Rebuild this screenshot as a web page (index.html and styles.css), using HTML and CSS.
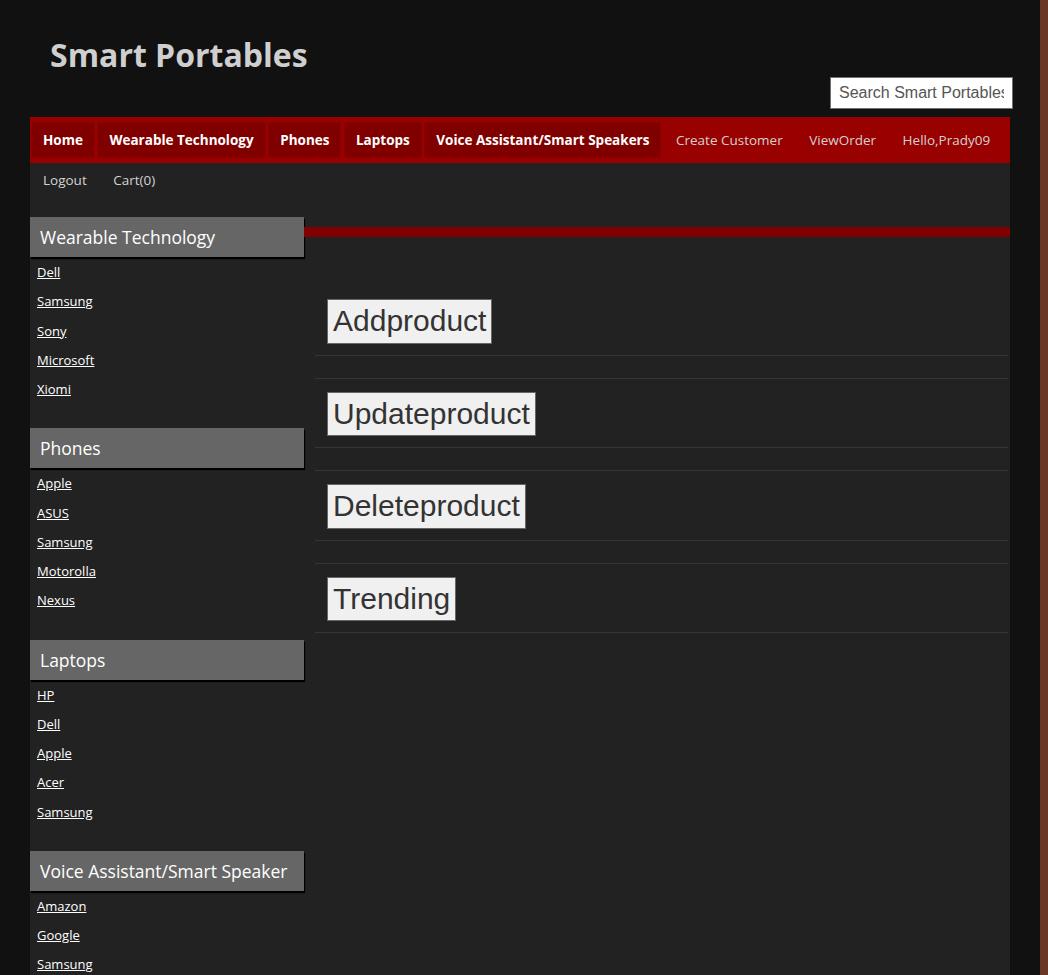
FILE: index.html
```html
<!DOCTYPE html>
<html lang="en">
<head>
<meta charset="utf-8">
<title>Smart Portables</title>
<link rel="stylesheet" href="styles.css">
</head>
<body>
<div class="page">
  <header class="masthead">
    <h1 class="brand">Smart Portables</h1>
    <div class="search-row">
      <input class="search" type="text" placeholder="Search Smart Portables">
    </div>
  </header>
  <div class="container">
    <nav class="topnav">
      <ul class="nav-list">
        <li><a class="tab" href="#">Home</a></li>
        <li><a class="tab" href="#">Wearable Technology</a></li>
        <li><a class="tab" href="#">Phones</a></li>
        <li><a class="tab" href="#">Laptops</a></li>
        <li><a class="tab" href="#">Voice Assistant/Smart Speakers</a></li>
        <li><a class="link" href="#">Create Customer</a></li>
        <li><a class="link" href="#">ViewOrder</a></li>
        <li><a class="link" href="#">Hello,Prady09</a></li>
        <li><a class="link" href="#">Logout</a></li>
        <li><a class="link" href="#">Cart(0)</a></li>
      </ul>
    </nav>
    <div class="body">
      <aside class="sidebar">
        <section class="cat">
          <h2 class="cat-title">Wearable Technology</h2>
          <ul class="cat-list">
            <li><a href="#">Dell</a></li>
            <li><a href="#">Samsung</a></li>
            <li><a href="#">Sony</a></li>
            <li><a href="#">Microsoft</a></li>
            <li><a href="#">Xiomi</a></li>
          </ul>
        </section>
        <section class="cat">
          <h2 class="cat-title">Phones</h2>
          <ul class="cat-list">
            <li><a href="#">Apple</a></li>
            <li><a href="#">ASUS</a></li>
            <li><a href="#">Samsung</a></li>
            <li><a href="#">Motorolla</a></li>
            <li><a href="#">Nexus</a></li>
          </ul>
        </section>
        <section class="cat">
          <h2 class="cat-title">Laptops</h2>
          <ul class="cat-list">
            <li><a href="#">HP</a></li>
            <li><a href="#">Dell</a></li>
            <li><a href="#">Apple</a></li>
            <li><a href="#">Acer</a></li>
            <li><a href="#">Samsung</a></li>
          </ul>
        </section>
        <section class="cat">
          <h2 class="cat-title">Voice Assistant/Smart Speaker</h2>
          <ul class="cat-list">
            <li><a href="#">Amazon</a></li>
            <li><a href="#">Google</a></li>
            <li><a href="#">Samsung</a></li>
          </ul>
        </section>
      </aside>
      <main class="content">
        <div class="actions">
          <div class="action-row"><button class="action-btn" type="button">Addproduct</button></div>
          <div class="action-row"><button class="action-btn" type="button">Updateproduct</button></div>
          <div class="action-row"><button class="action-btn" type="button">Deleteproduct</button></div>
          <div class="action-row"><button class="action-btn" type="button">Trending</button></div>
        </div>
      </main>
    </div>
  </div>
</div>
</body>
</html>
```
FILE: styles.css
```css
html, body {
  margin: 0;
  padding: 0;
}
body {
  background: #6a3727;
  font-family: "Open Sans", "DejaVu Sans", sans-serif;
}
.page {
  width: 1040px;
  min-height: 975px;
  background: #111111;
  padding-left: 30px;
  box-sizing: border-box;
}
.masthead {
  width: 980px;
  padding-top: 32px;
}
.brand {
  margin: 0;
  padding-left: 20px;
  font-family: "Open Sans", sans-serif;
  font-weight: 700;
  font-size: 32px;
  line-height: 45px;
  color: #cfcfcf;
}
.search-row {
  display: flex;
  justify-content: flex-end;
  margin-right: -3px;
  margin-bottom: 8px;
}
.search {
  width: 183px;
  height: 32px;
  box-sizing: border-box;
  border: 1px solid #707070;
  background: #fff;
  padding: 0 8px;
  font-family: "Liberation Sans", Arial, sans-serif;
  font-size: 16px;
  color: #333;
}
.search::placeholder {
  color: #555;
  opacity: 1;
}
.container {
  width: 980px;
  background: #222222;
  min-height: 858px;
}
.topnav {
  background: linear-gradient(#990000 0 46px, transparent 46px);
}
.nav-list {
  list-style: none;
  margin: 0;
  padding: 6px 3px 0 2px;
  display: flex;
  flex-wrap: wrap;
  gap: 6px 4.5px;
}
.nav-list a {
  display: block;
  height: 34px;
  line-height: 34px;
  padding: 0 11px;
  font-size: 13.5px;
  text-decoration: none;
}
.tab {
  background: #800000;
  color: #fff;
  font-weight: 700;
  box-shadow: 0 0 1px rgba(0,0,0,0.5);
}
.link {
  color: #d2d2d2;
  font-weight: 400;
}
.body {
  display: flex;
  margin-top: 20px;
}
.sidebar {
  width: 274px;
  flex: none;
}
.cat-title {
  margin: 0;
  height: 40px;
  line-height: 40px;
  padding-left: 10px;
  background: #666666;
  color: #fff;
  font-weight: 400;
  font-size: 17.5px;
  box-shadow: 1px 2px 1px #000;
}
.cat-list {
  list-style: none;
  margin: 0 0 24px;
  padding: 1px 0 0 7px;
}
.cat-list li {
  line-height: 29.25px;
  height: 29.25px;
  font-size: 13px;
}
.cat-list a {
  color: #fff;
  text-decoration: underline;
}
.content {
  flex: 1;
  margin-top: 10px;
  border-top: 10px solid #800000;
}
.actions {
  padding: 49px 2px 0 11px;
}
.action-row {
  padding: 13px 11px 11px;
  border-bottom: 1px solid #363636;
}
.action-row + .action-row {
  margin-top: 22px;
  border-top: 1px solid #363636;
}
.action-btn {
  display: block;
  margin: 0 0 0 1px;
  height: 44.5px;
  padding: 4px 5px;
  box-sizing: border-box;
  background: #f0f0f0;
  border: 1px solid #666;
  border-radius: 0;
  font-family: "Liberation Sans", Arial, sans-serif;
  font-size: 30px;
  line-height: 34px;
  color: #333;
}
```
